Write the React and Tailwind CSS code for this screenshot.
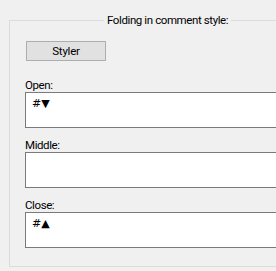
import React from 'react';

const fields = [
    { label: 'Open:', value: '#▼' },
    { label: 'Middle:', value: '' },
    { label: 'Close:', value: '#▲' },
];

const App = () => {
    return (
        <div className="w-[276px] h-[271px] overflow-hidden bg-[#f0f0f0] pt-[20px] pl-[9px] font-['Roboto',sans-serif] text-[11.5px] tracking-[-0.4px] text-[#000]">
            {/* Group box */}
            <div className="relative w-[320px] h-[247px] border border-[#dcdcdc] pl-[15px] pt-[20px]">
                <span className="absolute left-[94px] top-[-9px] bg-[#f0f0f0] px-[3px] leading-[16px]">
                    Folding in comment style:
                </span>

                <button className="ml-[1px] block w-[80px] h-[20px] border border-[#adadad] bg-[#e1e1e1] leading-[18px] tracking-[-0.2px]">
                    Styler
                </button>

                {fields.map((field, index) => (
                    <div key={index} className={index === 0 ? 'mt-[17px]' : 'mt-[10px]'}>
                        <div className="h-[14px] leading-[14px]">{field.label}</div>
                        <div className="h-[36px] border border-[#7a7a7a] bg-white pl-[6px] pt-[3px] leading-[16px] font-['DejaVu_Sans',sans-serif] text-[11px] tracking-normal">
                            {field.value}
                        </div>
                    </div>
                ))}
            </div>
        </div>
    );
};

export default App;
